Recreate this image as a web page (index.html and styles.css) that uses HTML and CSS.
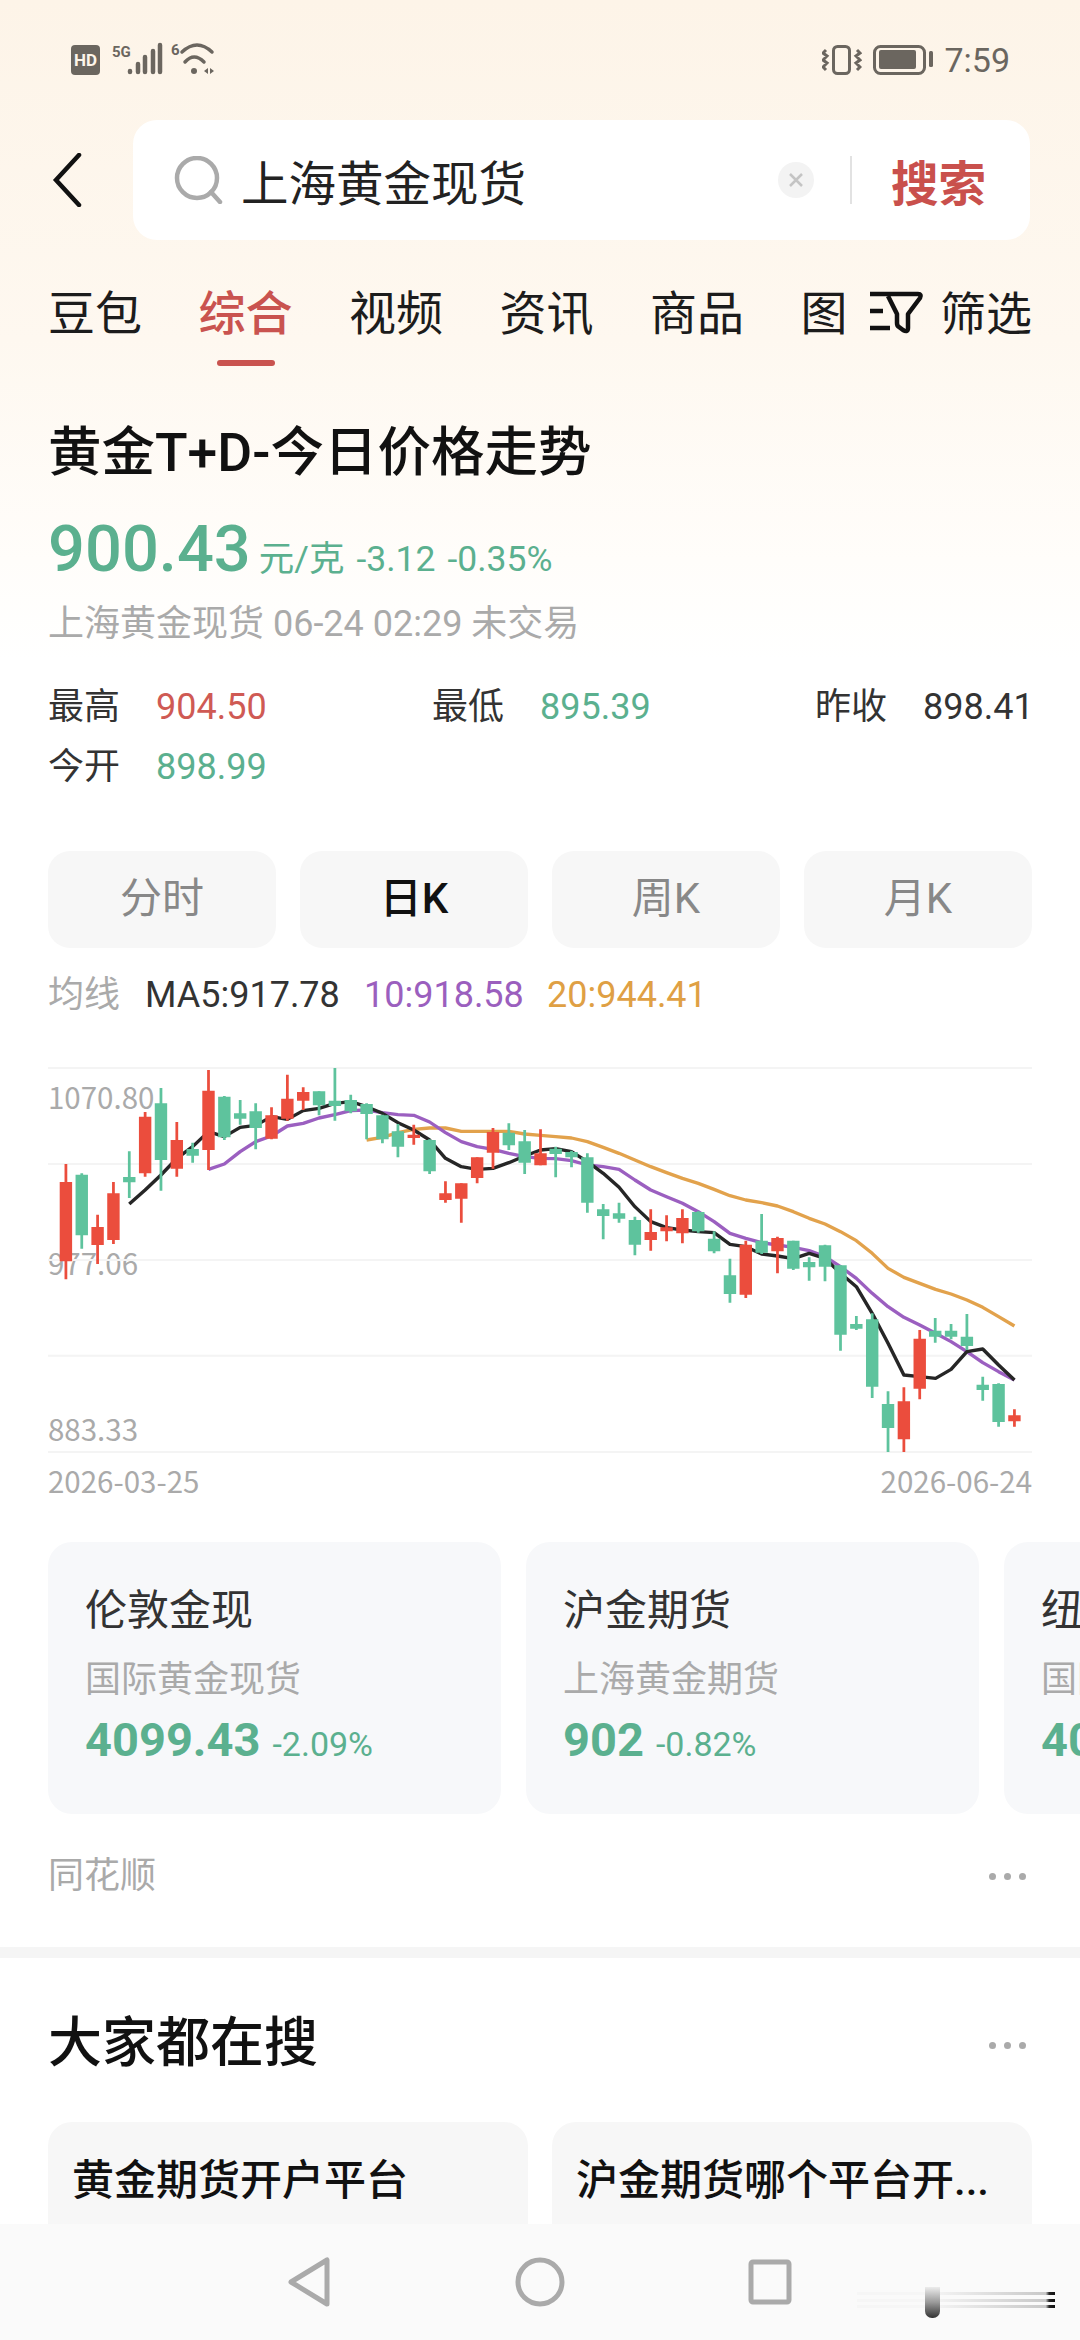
FILE: index.html
```html
<!DOCTYPE html>
<html lang="zh-CN">
<head>
    <meta charset="UTF-8">
    <meta name="viewport" content="width=device-width, initial-scale=1.0">
    <title>上海黄金现货</title>
    <link rel="stylesheet" href="styles.css">
</head>
<body>
<div class="page">
    <div class="status-bar">
        <div class="status-left">
            <span class="hd">HD</span>
            <svg class="signal" width="108" height="36" viewBox="0 0 108 36">
                <text class="net-text" x="2" y="15">5G</text>
                <path class="bars" d="M20 30v-1M28 30v-8M35 30v-15M43 30v-21M50 30v-27"/>
                <text class="net-text" x="61" y="13">6</text>
                <path class="wifi" d="M72 10Q87-4 102 10M75 20Q84 10 94 20"/>
                <circle class="wifi-dot" cx="84" cy="29" r="3"/>
                <path class="wifi-arrows" d="M98 26v6l-4-3zM100 26v6l4-3z"/>
            </svg>
        </div>
        <div class="status-right">
            <svg width="40" height="30" viewBox="0 0 40 30">
                <rect class="phone" x="11.5" y="1.5" width="16" height="27" rx="4"/>
                <path class="shake" d="M4 5L1 8l4 3-4 4 4 3-4 4 3 3M35 5l3 3-4 3 4 4-4 3 4 4-3 3"/>
            </svg>
            <svg class="battery" width="60" height="30" viewBox="0 0 60 30">
                <rect class="batt-case" x="1.5" y="1.5" width="50" height="27" rx="6"/>
                <rect class="batt-level" x="6" y="5" width="37" height="19" rx="2"/>
                <rect class="batt-level" x="56" y="6" width="4" height="16" rx="1.5"/>
            </svg>
            <span class="clock">7:59</span>
        </div>
    </div>

    <div class="search-row">
        <svg class="back" width="30" height="54" viewBox="0 0 30 54"><path d="M27 2L4 27l23 25"/></svg>
        <div class="search-box">
            <svg class="search-icon" width="50" height="48" viewBox="0 0 50 48">
                <circle cx="23" cy="22" r="20"/>
                <path d="M37 36l9 10"/>
            </svg>
            <span class="search-text">上海黄金现货</span>
            <span class="clear">
                <svg width="16" height="16" viewBox="0 0 16 16"><path d="M2 2l12 12M14 2L2 14"/></svg>
            </span>
            <span class="search-line"></span>
            <span class="search-btn">搜索</span>
        </div>
    </div>

    <div class="tabs-row">
        <div class="tabs">
            <span class="tab">豆包</span>
            <span class="tab active">综合</span>
            <span class="tab">视频</span>
            <span class="tab">资讯</span>
            <span class="tab">商品</span>
            <span class="tab">图片</span>
        </div>
        <div class="filter">
            <svg width="56" height="46" viewBox="0 0 56 46">
                <path d="M2 4h20M2 21h13M2 38h20"/>
                <path d="M22 4h28q4 0 2 4L40 24v14q0 5-5 2l-4-3q-2-1-2-4V24L20 6"/>
            </svg>
            <span>筛选</span>
        </div>
    </div>

    <section class="quote">
        <h1>黄金T+D-今日价格走势</h1>
        <div class="price-line">
            <span class="price">900.43</span>
            <span class="unit">元/克</span>
            <span class="change">-3.12</span>
            <span class="change">-0.35%</span>
        </div>
        <div class="sub-line">上海黄金现货 06-24 02:29 未交易</div>

        <div class="stats">
            <div class="stat"><span class="stat-name">最高</span><span class="up">904.50</span></div>
            <div class="stat"><span class="stat-name">最低</span><span class="down">895.39</span></div>
            <div class="stat"><span class="stat-name">昨收</span><span>898.41</span></div>
            <div class="stat"><span class="stat-name">今开</span><span class="down">898.99</span></div>
        </div>

        <div class="periods">
            <span class="period">分时</span>
            <span class="period active">日K</span>
            <span class="period">周K</span>
            <span class="period">月K</span>
        </div>

        <div class="ma-line">
            <span class="ma-name">均线</span>
            <span class="ma5">MA5:917.78</span>
            <span class="ma10">10:918.58</span>
            <span class="ma20">20:944.41</span>
        </div>

        <div class="chart">
            <span class="axis-label axis-top">1070.80</span>
            <span class="axis-label axis-mid">977.06</span>
            <span class="axis-label axis-low">883.33</span>
            <svg class="kline" width="984" height="400" viewBox="139 30 2857 1200" preserveAspectRatio="none">
                <path class="grid" d="M139 54H2996M139 342H2996M139 630H2996M139 917H2996M139 1206H2996"/>
                <polyline class="line-20" points="1064,270 1110,262 1155,248 1201,238 1247,234 1293,234 1339,244 1385,244 1431,244 1477,244 1523,252 1569,256 1613,260 1659,264 1705,275 1751,292 1797,310 1843,330 1889,350 1935,368 1981,385 2027,400 2073,418 2119,437 2165,450 2211,458 2257,468 2303,485 2349,505 2395,522 2440,545 2486,572 2532,610 2578,655 2624,682 2670,700 2716,718 2761,732 2807,750 2853,772 2899,800 2945,828"/>
                <polyline class="line-10" points="605,358 651,342 697,305 742,275 788,258 834,228 880,220 926,204 972,194 1018,182 1064,180 1110,188 1155,194 1201,196 1247,216 1293,248 1339,275 1385,290 1431,298 1477,310 1523,320 1569,325 1613,326 1659,332 1705,345 1751,350 1797,358 1843,390 1889,420 1935,440 1981,460 2027,485 2073,515 2119,550 2165,565 2211,578 2257,585 2303,592 2349,602 2395,620 2440,650 2486,685 2532,730 2578,770 2624,802 2670,825 2716,850 2761,875 2807,905 2853,938 2899,965 2945,990"/>
                <polyline class="line-5" points="375,462 421,420 467,375 513,325 559,290 605,245 651,260 697,232 742,226 788,200 834,208 880,182 926,175 972,160 1018,155 1064,170 1110,190 1155,218 1201,240 1247,270 1293,325 1339,350 1385,358 1431,355 1477,338 1523,318 1569,300 1613,296 1659,305 1705,335 1751,370 1797,412 1843,470 1889,515 1935,533 1981,540 2027,545 2073,548 2119,583 2165,590 2211,612 2257,618 2303,626 2349,610 2395,625 2440,670 2486,710 2532,790 2578,880 2624,975 2670,980 2716,985 2761,958 2807,905 2853,897 2899,945 2945,990"/>
                <!-- candles: thin stroke = wick, wide stroke = body -->
                <path class="wick green" d="M237 370V596M375 304V444M467 114V422M559 278V338M651 138V270M697 150V224M742 160V298M926 124V196M972 54V212M1018 134V190M1064 160V268M1110 194V280M1155 222V322M1247 268V372M1477 220V300M1523 240V372M1613 290V382M1659 302V352M1705 310V488M1751 462V568M1797 458V518M1843 500V616M2027 484V548M2073 544V610M2119 626V758M2211 492V612M2303 572V660M2349 622V692M2395 584V694M2440 646V902M2486 798V840M2532 790V1044M2578 1024V1206M2715 804V878M2761 822V868M2807 792V900M2853 980V1052M2899 1000V1130"/>
                <path class="body green" d="M237 374V556M375 381V397M467 160V330M559 297V317M651 140V262M697 190V206M742 184V234M926 124V166M972 152V168M1018 150V184M1064 162V192M1110 196V268M1155 244V290M1247 270V364M1477 248V286M1523 274V338M1613 296V312M1659 306V322M1705 322V458M1751 478V498M1797 490V506M1843 510V584M2027 486V544M2073 566V604M2119 676V732M2211 572V608M2303 572V656M2349 636V652M2395 586V650M2440 646V854M2486 822V836M2532 808V1010M2578 1062V1134M2715 842V860M2761 842V860M2807 860V888M2853 1004V1020M2899 1002V1116"/>
                <path class="wick red" d="M191 342V688M283 494V642M329 396V582M421 186V380M513 216V380M605 60V360M788 172V268M834 74V212M880 112V180M1201 224V284M1293 394V458M1339 400V518M1385 322V400M1431 234V356M1569 238V346M1889 478V602M1935 496V574M1981 478V580M2165 572V744M2257 560V670M2624 1012V1206M2670 840V1048M2945 1078V1130"/>
                <path class="body red" d="M191 396V634M283 531V585M329 430V570M421 200V370M513 270V356M605 122V300M788 196V266M834 146V206M880 126V152M1201 254V264M1293 430V450M1339 400V446M1385 322V384M1431 246V308M1569 310V346M1889 546V570M1935 532V544M1981 504V550M2165 584V734M2257 564V604M2624 1054V1168M2670 866V1016M2945 1096V1114"/>
            </svg>
            <div class="chart-dates">
                <span>2026-03-25</span>
                <span>2026-06-24</span>
            </div>
        </div>

        <div class="cards">
            <div class="card">
                <div class="card-title">伦敦金现</div>
                <div class="card-sub">国际黄金现货</div>
                <div class="card-value"><b>4099.43</b><span>-2.09%</span></div>
            </div>
            <div class="card">
                <div class="card-title">沪金期货</div>
                <div class="card-sub">上海黄金期货</div>
                <div class="card-value"><b>902</b><span>-0.82%</span></div>
            </div>
            <div class="card">
                <div class="card-title">纽约金</div>
                <div class="card-sub">国际黄金期货</div>
                <div class="card-value"><b>4099.10</b><span>-2.10%</span></div>
            </div>
        </div>

        <div class="source">
            <span>同花顺</span>
            <span class="dots"><i></i><i></i><i></i></span>
        </div>
    </section>

    <section class="hot">
        <div class="hot-head">
            <h2>大家都在搜</h2>
            <span class="dots hot-dots"><i></i><i></i><i></i></span>
        </div>
        <div class="hot-grid">
            <div class="hot-item">黄金期货开户平台</div>
            <div class="hot-item">沪金期货哪个平台开...</div>
        </div>
    </section>

    <div class="nav-bar">
        <svg width="44" height="50" viewBox="0 0 44 50"><path d="M40 3v44L4 25z"/></svg>
        <svg width="50" height="50" viewBox="0 0 50 50"><circle cx="25" cy="25" r="22"/></svg>
        <svg width="44" height="46" viewBox="0 0 44 46"><rect x="3" y="3" width="38" height="40" rx="2"/></svg>
    </div>
    <div class="mark">
        <span class="mark-lines mark-ghost"><i></i><i></i><i></i></span>
        <span class="mark-bar"></span>
        <span class="mark-lines"><i></i><i></i><i></i></span>
    </div>
</div>
</body>
</html>
```

FILE: styles.css
```css
* {
    margin: 0;
    padding: 0;
    box-sizing: border-box;
}

body {
    background-color: #fff;
    font-family: "Roboto", "Noto Sans CJK SC", sans-serif;
    color: #333;
}

.page {
    position: relative;
    width: 1080px;
    height: 2340px;
    overflow: hidden;
    background: linear-gradient(#fdf4e8 0, #fef8f0 340px, #fffdfa 560px, #fff 660px);
}

/* status bar */
.status-bar {
    height: 120px;
    padding: 0 70px 0 71px;
    display: flex;
    justify-content: space-between;
    align-items: center;
}

.status-left,
.status-right {
    display: flex;
    align-items: center;
}

.hd {
    width: 29px;
    height: 30px;
    background-color: #6b665f;
    border-radius: 4px;
    color: #fdf5e9;
    font-size: 17px;
    font-weight: 700;
    line-height: 30px;
    text-align: center;
    margin-right: 10px;
}

.net-text {
    font-size: 15px;
    font-weight: 700;
    fill: #6b665f;
}

.bars {
    fill: none;
    stroke: #6b665f;
    stroke-width: 4.5;
    stroke-linecap: round;
}

.signal {
    overflow: visible;
}

.wifi {
    fill: none;
    stroke: #6b665f;
    stroke-width: 3.5;
    stroke-linecap: round;
}

.wifi-dot,
.wifi-arrows {
    fill: #6b665f;
}

.phone,
.shake,
.batt-case {
    fill: none;
    stroke: #6b665f;
    stroke-width: 3;
}

.batt-level {
    fill: #6b665f;
}

.battery {
    margin-left: 11px;
}

.clock {
    margin-left: 11px;
    font-size: 34px;
    color: #6b665f;
}

/* search */
.search-row {
    height: 120px;
    padding: 0 48px 0 52px;
    display: flex;
    align-items: center;
}

.back {
    flex: none;
}

.back path {
    fill: none;
    stroke: #111;
    stroke-width: 4.5;
    stroke-linecap: round;
}

.search-box {
    width: 897px;
    height: 120px;
    margin-left: 51px;
    padding-left: 41px;
    background-color: #fff;
    border-radius: 24px;
    display: flex;
    align-items: center;
}

.search-icon {
    fill: none;
    stroke: #aaa;
    stroke-width: 4.5;
    stroke-linecap: round;
}

.search-text {
    margin-left: 17px;
    width: 537px;
    font-size: 47.5px;
    color: #222;
}

.clear {
    width: 36px;
    height: 36px;
    border-radius: 50%;
    background-color: #f3f3f3;
    display: flex;
    align-items: center;
    justify-content: center;
}

.clear path {
    fill: none;
    stroke: #c4c4c4;
    stroke-width: 2.5;
}

.search-line {
    width: 2px;
    height: 48px;
    margin-left: 36px;
    background-color: #e2e2e2;
}

.search-btn {
    margin-left: 39px;
    font-size: 47.5px;
    font-weight: 700;
    color: #c9504c;
}

/* tabs */
.tabs-row {
    height: 126px;
    padding: 0 48px;
    display: flex;
    justify-content: space-between;
}

.tabs {
    width: 796px;
    height: 126px;
    display: flex;
    gap: 56.5px;
    overflow: hidden;
}

.tab {
    flex: none;
    position: relative;
    height: 126px;
    padding-top: 41px;
    font-size: 47px;
    line-height: 66px;
    color: #1c1c1c;
}

.tab.active {
    color: #c9534f;
    font-weight: 500;
}

.tab.active::after {
    content: "";
    position: absolute;
    left: 18px;
    right: 18px;
    bottom: 0;
    height: 6px;
    border-radius: 3px;
    background-color: #c9534f;
}

.filter {
    height: 106px;
    padding-top: 41px;
    display: flex;
    gap: 16px;
    font-size: 46px;
    line-height: 66px;
    color: #1c1c1c;
}

.filter svg {
    margin-top: 9px;
}

.filter path {
    fill: none;
    stroke: #111;
    stroke-width: 4.5;
    stroke-linejoin: round;
}

/* quote */
.quote {
    padding: 57px 48px 0;
}

h1 {
    font-size: 53.5px;
    line-height: 60px;
    font-weight: 500;
    color: #111;
}

.price-line {
    height: 80px;
    margin-top: 26px;
    display: flex;
    align-items: baseline;
    line-height: 80px;
    color: #5bb08f;
}

.price {
    font-size: 65px;
    font-weight: 500;
}

.unit {
    margin-left: 8px;
    font-size: 35.5px;
}

.change {
    margin-left: 12px;
    font-size: 35.5px;
}

.sub-line {
    margin-top: 10px;
    font-size: 36px;
    line-height: 50px;
    color: #aaa;
}

.stats {
    margin-top: 33px;
    display: grid;
    grid-template-columns: 384px 383px 1fr;
    row-gap: 10px;
    font-size: 36px;
    line-height: 50px;
}

.stat {
    display: flex;
}

.stat-name {
    width: 108px;
}

.up {
    color: #cf5a54;
}

.down {
    color: #5bb08f;
}

.periods {
    margin-top: 59px;
    display: grid;
    grid-template-columns: repeat(4, 228px);
    gap: 24px;
}

.period {
    height: 97px;
    background-color: #f7f7f7;
    border-radius: 22px;
    font-size: 42px;
    line-height: 96px;
    text-align: center;
    color: #888;
}

.period.active {
    color: #111;
    font-weight: 500;
}

.ma-line {
    margin-top: 22px;
    display: flex;
    font-size: 36px;
    line-height: 50px;
}

.ma-name {
    width: 97px;
    color: #aaa;
}

.ma5 {
    width: 219px;
}

.ma10 {
    width: 183px;
    color: #9b5fbe;
}

.ma20 {
    color: #dfa044;
}

/* chart */
.chart {
    position: relative;
    margin-top: 40px;
    font-family: "Noto Sans CJK SC", sans-serif;
}

.kline {
    position: relative;
    display: block;
}

.axis-label {
    position: absolute;
    left: 0;
    font-size: 29.5px;
    line-height: 40px;
    color: #aaa;
}

.axis-top {
    top: 16px;
}

.axis-mid {
    top: 182px;
}

.axis-low {
    top: 348px;
}

.grid {
    fill: none;
    stroke: #f4f4f4;
    stroke-width: 6;
}

.line-5,
.line-10,
.line-20 {
    fill: none;
    stroke-width: 10;
    stroke-linejoin: round;
}

.line-5 {
    stroke: #262626;
}

.line-10 {
    stroke: #9b5fc0;
}

.line-20 {
    stroke: #e2a24c;
}

.wick {
    fill: none;
    stroke-width: 8;
}

.body {
    fill: none;
    stroke-width: 36;
}

.green {
    stroke: #5ec39d;
}

.red {
    stroke: #eb4d3d;
}

.chart-dates {
    height: 42px;
    display: flex;
    justify-content: space-between;
    font-size: 29.5px;
    line-height: 40px;
    color: #aaa;
}

/* quote cards */
.cards {
    margin-top: 40px;
    width: 1032px;
    display: flex;
    gap: 25px;
    overflow: hidden;
}

.card {
    flex: none;
    width: 453px;
    height: 272px;
    padding: 43px 0 0 37px;
    background-color: #f7f8fa;
    border-radius: 24px;
}

.card-title {
    font-size: 42px;
    line-height: 52px;
    color: #333;
}

.card-sub {
    margin-top: 20px;
    font-size: 36px;
    line-height: 46px;
    color: #aaa;
}

.card-value {
    margin-top: 7px;
    display: flex;
    align-items: baseline;
    gap: 12px;
    line-height: 60px;
    color: #5bb08f;
}

.card-value b {
    font-size: 47px;
    font-weight: 700;
}

.card-value span {
    font-size: 34px;
}

.source {
    margin-top: 37px;
    display: flex;
    justify-content: space-between;
    align-items: center;
    font-size: 36px;
    line-height: 50px;
    color: #aaa;
}

.dots {
    display: flex;
    gap: 8px;
    padding-right: 6px;
}

.dots i {
    width: 7px;
    height: 7px;
    border-radius: 50%;
    background-color: #aaa;
}

.hot-dots {
    margin-top: 10px;
}

/* everyone searches */
.hot {
    margin-top: 46px;
    border-top: 11px solid #f5f5f5;
    padding: 0 48px;
}

.hot-head {
    height: 164px;
    display: flex;
    justify-content: space-between;
    align-items: center;
}

h2 {
    margin-top: 8px;
    font-size: 54px;
    line-height: 70px;
    font-weight: 500;
    color: #111;
}

.hot-grid {
    display: grid;
    grid-template-columns: 480px 480px;
    gap: 24px;
}

.hot-item {
    height: 160px;
    padding: 30px 24px 0;
    background-color: #f7f7f7;
    border-radius: 24px;
    font-size: 42px;
    font-weight: 500;
    line-height: 58px;
    color: #111;
    white-space: nowrap;
}

/* system nav */
.nav-bar {
    position: absolute;
    left: 0;
    right: 0;
    bottom: 0;
    height: 116px;
    background-color: #fafafa;
}

.nav-bar svg {
    position: absolute;
    top: 33px;
}

.nav-bar svg:nth-child(1) {
    left: 287px;
}

.nav-bar svg:nth-child(2) {
    left: 515px;
}

.nav-bar svg:nth-child(3) {
    left: 748px;
    top: 35px;
}

.nav-bar path,
.nav-bar circle,
.nav-bar rect {
    fill: none;
    stroke: #aaa;
    stroke-width: 5;
    stroke-linejoin: round;
}

.mark {
    position: absolute;
    left: 857px;
    top: 2287px;
    display: flex;
}

.mark-bar {
    width: 15px;
    height: 31px;
    border-radius: 0 0 7px 7px;
    background: linear-gradient(#ececec, #999 50%, #333);
}

.mark-lines {
    width: 115px;
    padding-top: 5px;
    display: flex;
    flex-direction: column;
    gap: 3.5px;
}

.mark-lines i {
    height: 3px;
    background: linear-gradient(90deg, #f2f2f2, #c8c8c8 92%, #222 95%, #111);
}

.mark-ghost {
    width: 68px;
}

.mark-ghost i {
    background: #f6f6f6;
}
```
